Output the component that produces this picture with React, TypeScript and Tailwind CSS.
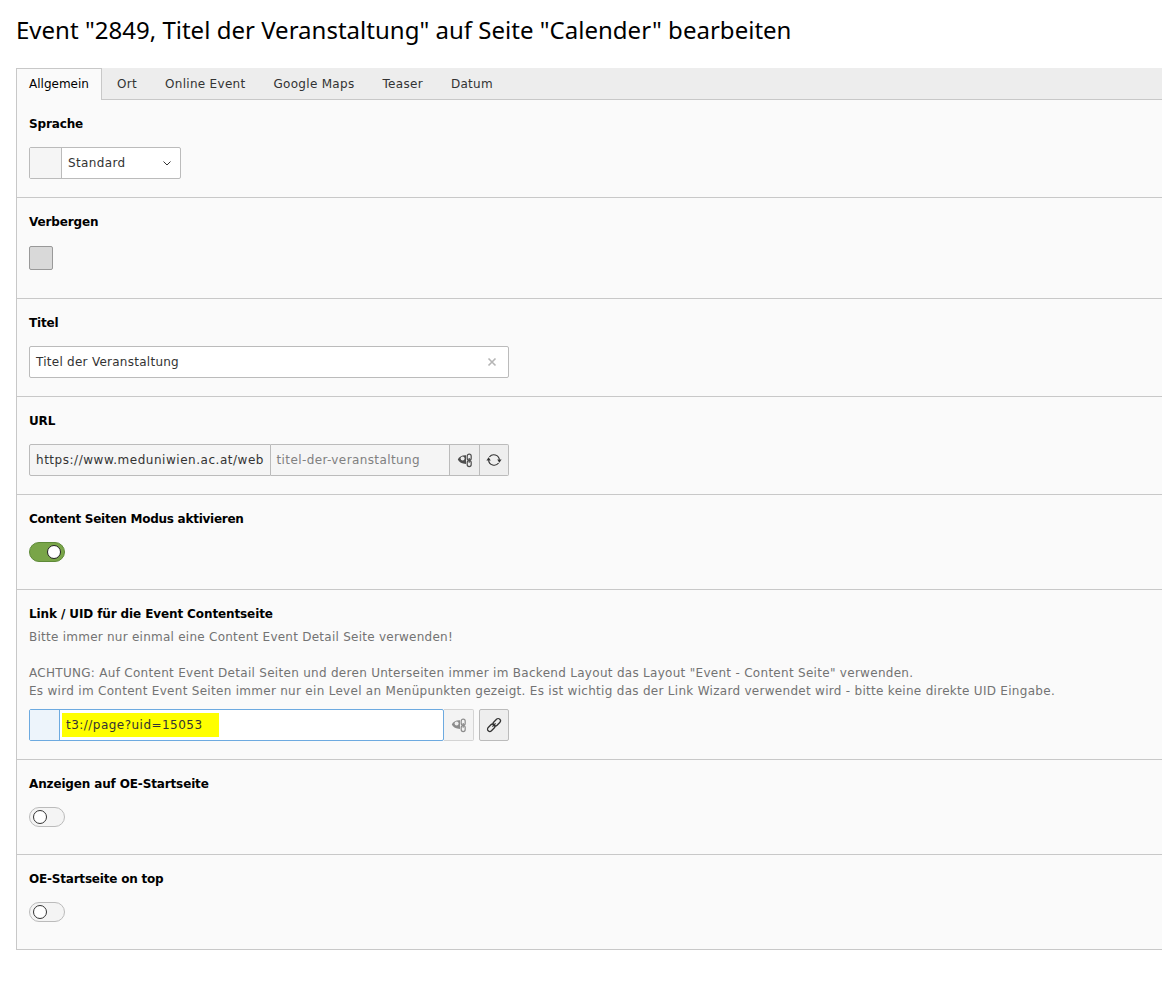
import type { ReactNode } from "react";

const font = "font-['DejaVu_Sans',Verdana,sans-serif]";

function Field({ label, pb, tracking = "tracking-[-0.14px]", children }: { label: string; pb: string; tracking?: string; children: ReactNode }) {
  return (
    <div className={`border-b border-[#c8c8c8] pl-3 pt-[15px] ${pb}`}>
      <div className={`h-[18px] text-[12px] leading-[18px] font-bold text-black ${tracking}`}>{label}</div>
      {children}
    </div>
  );
}

function Toggle({ on }: { on?: boolean }) {
  return (
    <div
      className={`mt-[14px] flex h-5 w-9 items-center rounded-full border px-[3px] ${
        on ? "justify-end border-[#5e8a38] bg-[#79a548]" : "justify-start border-[#bbbbbb] bg-[#f4f4f4]"
      }`}
    >
      <div className={`h-[14px] w-[14px] rounded-full border bg-white ${on ? "border-[#222]" : "border-[#333]"}`} />
    </div>
  );
}

function EyeChain({ muted }: { muted?: boolean }) {
  const c = muted ? "#8c8c8c" : "#4d4d4d";
  return (
    <svg width="16" height="16" viewBox="0 0 16 16" fill="none">
      <path d="M0.8 7.6C1.8 4.6 5 3 9 3.2V12C5 12 2 10.4 0.8 7.6z" fill={c} />
      <circle cx="5.6" cy="6.6" r="2" fill="#eeeeee" />
      <rect x="10.2" y="2.2" width="4" height="6" rx="2" stroke={c} strokeWidth="1.2" />
      <rect x="10.2" y="8.6" width="4" height="6" rx="2" stroke={c} strokeWidth="1.2" />
      <path d="M12.2 6v4.8" stroke={c} strokeWidth="1.2" />
    </svg>
  );
}

function Refresh() {
  return (
    <svg width="16" height="16" viewBox="0 0 16 16" fill="none">
      <path d="M3.4 5A5.6 5.6 0 0 1 13.4 7.8" stroke="#333" strokeWidth="1.2" />
      <path d="M12.6 11A5.6 5.6 0 0 1 2.6 8.2" stroke="#333" strokeWidth="1.2" />
      <path d="M0.4 8.6h4.4L2.6 5.2z" fill="#333" />
      <path d="M11.2 7.4h4.4L13.4 10.8z" fill="#333" />
    </svg>
  );
}

function ChainLink() {
  return (
    <svg width="16" height="16" viewBox="0 0 16 16" fill="none" stroke="#333" strokeWidth="1.3">
      <rect x="8.5" y="1" width="4.6" height="8.4" rx="2.3" transform="rotate(45 10.8 5.2)" />
      <rect x="2.9" y="6.6" width="4.6" height="8.4" rx="2.3" transform="rotate(45 5.2 10.8)" />
      <path d="M6.4 9.6l3.2-3.2" />
    </svg>
  );
}

export default function App() {
  const tabs = ["Ort", "Online Event", "Google Maps", "Teaser", "Datum"];

  return (
    <div className={`min-h-[989px] bg-white pb-[39px] pl-4 ${font}`}>
      <h1 className="h-[68px] pt-[13px] font-['Noto_Sans',sans-serif] text-[24px] leading-[34px] font-normal tracking-[0.015px] text-black">
        Event "2849, Titel der Veranstaltung" auf Seite "Calender" bearbeiten
      </h1>

      <div className="flex h-8 items-stretch border-b border-[#c8c8c8] bg-[#ededed] text-[12px] tracking-[0.3px] text-[#333]">
        <div className="mb-[-1px] flex h-8 w-[86px] items-center justify-center border border-b-0 border-[#c8c8c8] bg-[#fafafa] pb-0.5 tracking-normal text-black">
          Allgemein
        </div>
        <div className="flex items-center gap-7 pl-[15px]">
          {tabs.map((tab) => (
            <span key={tab}>{tab}</span>
          ))}
        </div>
      </div>

      <div className="border-l border-[#c8c8c8] bg-[#fafafa]">
        <Field label="Sprache" pb="pb-[18px]">
          <div className="mt-[14px] flex h-8 w-[152px] rounded-[2px] border border-[#bbbbbb] bg-white text-[12px] text-[#333]">
            <div className="w-[32px] border-r border-[#bbbbbb] bg-[#f5f5f5]" />
            <div className="flex flex-1 items-center justify-between pr-2 pl-1.5">
              <span className="tracking-[0.37px]">Standard</span>
              <svg width="10" height="10" viewBox="0 0 10 10" fill="none" stroke="#333" strokeWidth="1">
                <path d="M1.5 3.5 5 7l3.5-3.5" />
              </svg>
            </div>
          </div>
        </Field>

        <Field label="Verbergen" pb="pb-7">
          <div className="mt-[15px] h-6 w-6 rounded-[2px] border border-[#999] bg-[#d9d9d9]" />
        </Field>

        <Field label="Titel" pb="pb-[18px]">
          <div className="mt-[14px] flex h-8 w-[480px] items-center justify-between rounded-[2px] border border-[#bbbbbb] bg-white pr-[11px] pl-1.5 text-[12px] text-[#333]">
            <span className="tracking-[0.26px]">Titel der Veranstaltung</span>
            <svg width="10" height="10" viewBox="0 0 10 10" stroke="#b5b5b5" strokeWidth="1.6">
              <path d="M1.5 1.5l7 7M8.5 1.5l-7 7" />
            </svg>
          </div>
        </Field>

        <Field label="URL" pb="pb-[18px]">
          <div className="mt-[14px] flex h-8 w-[480px] text-[12px]">
            <div className="flex w-[242px] items-center rounded-l-[2px] border border-[#bbbbbb] bg-[#f5f5f5] pl-1.5 tracking-[0.53px] text-[#333]">
              https://www.meduniwien.ac.at/web
            </div>
            <div className="flex w-[180px] items-center border-y border-r border-[#bbbbbb] bg-[#f5f5f5] pl-1.5 tracking-[0.39px] text-[#808080]">
              titel-der-veranstaltung
            </div>
            <div className="flex w-[30px] items-center justify-center border-y border-r border-[#bbbbbb] bg-[#eeeeee]">
              <EyeChain />
            </div>
            <div className="flex w-[29px] items-center justify-center rounded-r-[2px] border-y border-r border-[#bbbbbb] bg-[#eeeeee]">
              <Refresh />
            </div>
          </div>
        </Field>

        <Field label="Content Seiten Modus aktivieren" pb="pb-[27px]" tracking="tracking-[-0.26px]">
          <Toggle on />
        </Field>

        <Field label="Link / UID für die Event Contentseite" pb="pb-[18px]" tracking="tracking-[-0.11px]">
          <div className="mt-[5px] text-[12px] leading-[18px] tracking-[0.29px] text-[#737373]">
            <div className="tracking-[0.25px]">Bitte immer nur einmal eine Content Event Detail Seite verwenden!</div>
            <div className="mt-[18px]">
              ACHTUNG: Auf Content Event Detail Seiten und deren Unterseiten immer im Backend Layout das Layout "Event - Content Seite" verwenden.
            </div>
            <div>
              Es wird im Content Event Seiten immer nur ein Level an Menüpunkten gezeigt. Es ist wichtig das der Link Wizard verwendet wird - bitte keine direkte UID Eingabe.
            </div>
          </div>
          <div className="mt-[9px] flex h-8 w-[480px] text-[12px]">
            <div className="flex w-[415px] rounded-[2px] border border-[#6daae0] bg-white">
              <div className="w-[30px] border-r border-[#6daae0] bg-[#edf4fb]" />
              <div className="flex flex-1 items-center pl-0.5">
                <span className="flex h-6 w-[157px] items-center bg-[#ffff00] pl-1 tracking-[0.47px] text-[#333]">t3://page?uid=15053</span>
              </div>
            </div>
            <div className="flex w-[30px] items-center justify-center rounded-r-[2px] border-y border-r border-[#d4d4d4] bg-[#f3f3f3]">
              <EyeChain muted />
            </div>
            <div className="ml-[5px] flex w-[30px] items-center justify-center rounded-[2px] border border-[#bbbbbb] bg-[#eeeeee]">
              <ChainLink />
            </div>
          </div>
        </Field>

        <Field label="Anzeigen auf OE-Startseite" pb="pb-[27px]">
          <Toggle />
        </Field>

        <Field label="OE-Startseite on top" pb="pb-[27px]" tracking="tracking-[-0.2px]">
          <Toggle />
        </Field>
      </div>
    </div>
  );
}
